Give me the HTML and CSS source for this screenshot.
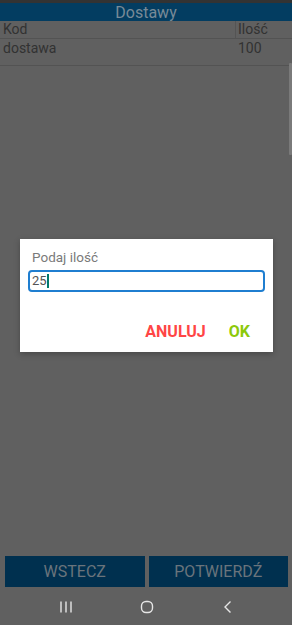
FILE: index.html
```html
<!DOCTYPE html>
<html lang="pl">
<head>
<meta charset="utf-8">
<link rel="stylesheet" href="styles.css">
</head>
<body>
<div class="screen">
  <div class="status"></div>
  <div class="title">Dostawy</div>
  <div class="trow thead">
    <div class="c1">Kod</div>
    <div class="c2">Ilość</div>
  </div>
  <div class="trow tbody">
    <div class="c1">dostawa</div>
    <div class="c2 nb">100</div>
  </div>
  <div class="fill"></div>
  <div class="actions">
    <div class="btn">WSTECZ</div>
    <div class="btn">POTWIERDŹ</div>
  </div>
  <div class="nav">
    <svg width="14" height="14" viewBox="0 0 14 14"><path d="M2 1.5v11M7 1.5v11M12 1.5v11" stroke="#e6e6e6" stroke-width="1.4" fill="none"/></svg>
    <svg width="14" height="14" viewBox="0 0 14 14"><rect x="1.5" y="1.5" width="11" height="11" rx="4.5" stroke="#e6e6e6" stroke-width="1.4" fill="none"/></svg>
    <svg width="14" height="14" viewBox="0 0 14 14"><path d="M9.5 1.5L4 7l5.5 5.5" stroke="#e6e6e6" stroke-width="1.4" fill="none"/></svg>
  </div>
  <div class="scrollbar"></div>
  <div class="dialog">
    <div class="dlabel">Podaj ilość</div>
    <div class="dinput"><span>25</span><span class="caret"></span></div>
    <div class="dbuttons">
      <span class="cancel">ANULUJ</span>
      <span class="ok">OK</span>
    </div>
  </div>
</div>
</body>
</html>
```
FILE: styles.css
```css
* { box-sizing: border-box; }
html, body { margin: 0; padding: 0; }
body { background: #606060; font-family: Roboto, "Noto Sans", sans-serif; }
.screen { position: relative; width: 292px; height: 625px; display: flex; flex-direction: column; background: #606060; overflow: hidden; }
.status { height: 3px; background: #333; }
.title { height: 18px; background: #033d61; color: #788a97; font-size: 16px; line-height: 19px; text-align: center; }
.trow { display: flex; color: #323232; font-size: 14px; border-bottom: 1px solid #535353; }
.thead { height: 18px; line-height: 17px; }
.tbody { height: 27px; line-height: 19px; }
.c1 { width: 235px; padding-left: 3px; }
.c2 { flex: 1; padding-left: 2px; border-left: 1px solid #545454; }
.c2.nb { border-left: 1px solid transparent; }
.fill { flex: 1; }
.actions { display: flex; gap: 4px; padding: 0 4px 0 5px; height: 31px; }
.btn { flex: 1; background: #00304f; color: #6a747c; font-size: 16px; line-height: 32px; text-align: center; }
.nav { height: 38px; display: flex; justify-content: space-between; align-items: center; padding: 2px 57px 0 59px; }
.nav svg { display: block; }
.scrollbar { position: absolute; right: 0; top: 63px; width: 3px; height: 92px; background: #7a7a7a; border-radius: 1px; }
.dialog { position: absolute; left: 20px; top: 239px; width: 253px; height: 113px; background: #fff; box-shadow: 0 2px 6px rgba(0,0,0,0.25); padding: 10px 8px 0 8px; }
.dlabel { color: #7a7a7a; font-size: 13.5px; line-height: 17px; padding-left: 4px; }
.dinput { margin-top: 4px; height: 22px; border: 2px solid #1f7ed0; border-radius: 4px; padding-left: 2px; font-size: 13px; line-height: 18px; color: #555; display: flex; align-items: center; }
.caret { display: inline-block; width: 2px; height: 14px; background: #00796b; }
.dbuttons { display: flex; justify-content: flex-end; gap: 23px; padding-right: 15px; margin-top: 30px; font-weight: bold; font-size: 16px; line-height: 19px; }
.cancel { color: #ff4545; }
.ok { color: #8cc90a; }
```
